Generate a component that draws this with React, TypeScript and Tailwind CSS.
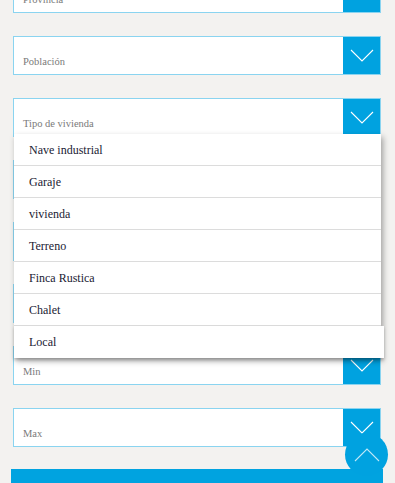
const fields = ['Provincia', 'Población', 'Tipo de vivienda', '', '', '', 'Min', 'Max'];
const options = ['Nave industrial', 'Garaje', 'vivienda', 'Terreno', 'Finca Rustica', 'Chalet', 'Local'];

function SelectBox({ label }: { label: string }) {
  return (
    <div className="flex h-[39px] border border-[#8ad4f0] bg-white">
      <div className="flex flex-1 items-end pb-[4px] pl-[9px] font-['Liberation_Serif',serif] text-[10.5px] text-[#7a7a7a]">
        {label}
      </div>
      <div className="flex w-[37px] items-center justify-center bg-[#00a2e0]">
        <svg width="24" height="14" viewBox="0 0 24 14" fill="none">
          <polyline points="1,1 12,12 23,1" stroke="white" strokeWidth="1.1" />
        </svg>
      </div>
    </div>
  );
}

export default function App() {
  return (
    <div className="relative h-[483px] w-[395px] overflow-hidden bg-[#f3f2f0] font-['Liberation_Serif',serif]">
      <div className="-mt-[26px] flex flex-col gap-[23px] pl-[13px] pr-[14px]">
        {fields.map((f, i) => (
          <SelectBox key={i} label={f} />
        ))}
        <div className="-mx-[2px] -mt-px flex h-[40px] justify-center bg-[#00a3e0] pt-[11px] font-['Liberation_Sans',sans-serif] text-[15px] font-bold text-white">
          Buscar
        </div>
      </div>

      {/* open dropdown of "Tipo de vivienda" */}
      <div className="absolute left-[14px] top-[134px] w-[367px] bg-white shadow-[2px_3px_6px_rgba(0,0,0,0.35)]">
        {options.map((o, i) => (
          <div
            key={o}
            className={`flex h-[32px] items-center bg-white pl-[15px] font-['Liberation_Serif',serif] text-[12px] text-[#1a1a33] ${
              i < options.length - 1 ? 'border-b border-[#dcdcdc]' : 'w-[370px] shadow-[0_2px_3px_rgba(0,0,0,0.2)]'
            }`}
          >
            {o}
          </div>
        ))}
      </div>

      {/* back to top */}
      <div className="absolute left-[345px] top-[433px] flex h-[43px] w-[43px] items-center justify-center rounded-full bg-[#00a2e0]">
        <svg width="26" height="14" viewBox="0 0 26 14" fill="none">
          <polyline points="1,13 13,1 25,13" stroke="rgba(255,255,255,0.75)" strokeWidth="1.1" />
        </svg>
      </div>
    </div>
  );
}
